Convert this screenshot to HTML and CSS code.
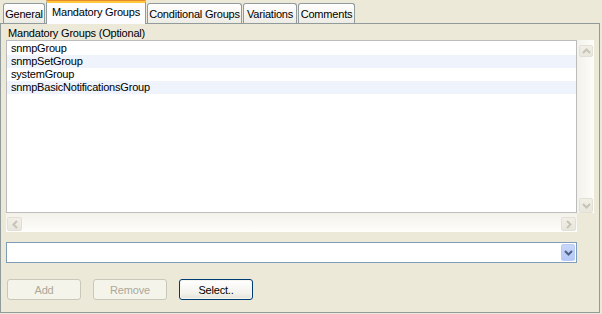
FILE: index.html
```html
<!DOCTYPE html>
<html>
<head>
<meta charset="utf-8">
<link rel="stylesheet" href="styles.css">
</head>
<body>
<div class="tabs">
  <div class="tab t-general">General</div>
  <div class="tab sel t-mand">Mandatory Groups</div>
  <div class="tab t-cond">Conditional Groups</div>
  <div class="tab t-var">Variations</div>
  <div class="tab t-com">Comments</div>
</div>
<div class="panel">
  <div class="label">Mandatory Groups (Optional)</div>
  <div class="scroller">
    <div class="list">
      <div class="row">snmpGroup</div>
      <div class="row alt">snmpSetGroup</div>
      <div class="row">systemGroup</div>
      <div class="row alt">snmpBasicNotificationsGroup</div>
    </div>
    <div class="vbar">
      <div class="sbtn">
        <svg width="9" height="6" viewBox="0 0 9 6"><path d="M1 5 L4.5 1.5 L8 5" fill="none" stroke="#C6C4B8" stroke-width="2"/></svg>
      </div>
      <div class="sbtn">
        <svg width="9" height="6" viewBox="0 0 9 6"><path d="M1 1 L4.5 4.5 L8 1" fill="none" stroke="#C6C4B8" stroke-width="2"/></svg>
      </div>
    </div>
    <div class="hbar">
      <div class="sbtn h">
        <svg width="6" height="9" viewBox="0 0 6 9"><path d="M5 1 L1.5 4.5 L5 8" fill="none" stroke="#C6C4B8" stroke-width="2"/></svg>
      </div>
      <div class="sbtn h">
        <svg width="6" height="9" viewBox="0 0 6 9"><path d="M1 1 L4.5 4.5 L1 8" fill="none" stroke="#C6C4B8" stroke-width="2"/></svg>
      </div>
    </div>
    <div class="corner"></div>
  </div>
  <div class="combo">
    <div class="combo-field"></div>
    <div class="combo-btn">
      <svg width="9" height="6" viewBox="0 0 9 6"><path d="M1 1 L4.5 4.5 L8 1" fill="none" stroke="#4D6185" stroke-width="2"/></svg>
    </div>
  </div>
  <div class="buttons">
    <div class="btn disabled">Add</div>
    <div class="btn disabled">Remove</div>
    <div class="btn default">Select..</div>
  </div>
</div>
</body>
</html>
```
FILE: styles.css
```css
html, body {
  margin: 0;
  padding: 0;
  background: #ECE9D8;
  font-family: "Liberation Sans", Arial, sans-serif;
  font-size: 11px;
  letter-spacing: -0.2px;
  color: #000;
  width: 602px;
  height: 314px;
  overflow: hidden;
}

.tabs {
  display: flex;
  align-items: flex-end;
  height: 23px;
  padding-left: 3px;
  position: relative;
  z-index: 2;
}

.tab {
  box-sizing: border-box;
  height: 20px;
  border: 1px solid #919B9C;
  border-bottom: none;
  border-radius: 3px 3px 0 0;
  background: linear-gradient(#FFFFFF, #F4F3EE 60%, #ECEBE4);
  display: flex;
  align-items: center;
  justify-content: center;
  padding-top: 1px;
  margin-right: 1px;
  white-space: nowrap;
}

.t-general { width: 42px; }
.t-mand { width: 100px; }
.t-cond { width: 95px; }
.t-var { width: 54px; }
.t-com { width: 57px; }

.tab.sel {
  height: 24px;
  margin-bottom: -1px;
  background: #FCFCFE;
  border-top: 3px solid #FFC83C;
  border-radius: 3px 3px 0 0;
  padding-top: 0;
  padding-bottom: 4px;
  position: relative;
}
.tab.sel::before {
  content: "";
  position: absolute;
  left: -1px;
  right: -1px;
  top: -3px;
  height: 1px;
  background: #E68B2C;
  border-radius: 3px 3px 0 0;
}

.panel {
  box-sizing: border-box;
  width: 600px;
  height: 290px;
  border: 1px solid #919B9C;
  padding: 3px 5px 0 5px;
  display: flex;
  flex-direction: column;
}

.label {
  height: 13px;
  line-height: 13px;
  padding-left: 2px;
}

.scroller {
  display: grid;
  grid-template-columns: 571px 17px;
  grid-template-rows: 173px 19px;
}

.list {
  box-sizing: border-box;
  border: 1px solid #BCBCBC;
  background: #FFFFFF;
  padding-top: 1px;
}

.row {
  height: 13px;
  line-height: 13px;
  padding-left: 4px;
}
.row.alt {
  background: #EEF3FC;
}

.vbar {
  background: linear-gradient(90deg, #F3F1EA, #FDFDFA);
  display: flex;
  flex-direction: column;
  justify-content: space-between;
  align-items: center;
  padding: 5px 0 0 1px;
}

.hbar {
  background: linear-gradient(#F3F1EA, #FEFEFB);
  display: flex;
  justify-content: space-between;
  align-items: flex-start;
  padding: 4px 1px 0 1px;
}

.corner {
  background: #ECE9D8;
}

.sbtn {
  box-sizing: border-box;
  width: 14px;
  height: 12px;
  border: 1px solid #E2E0D6;
  border-radius: 2px;
  background: linear-gradient(#F1EFE6, #E8E6DD);
  display: flex;
  align-items: center;
  justify-content: center;
}
.vbar .sbtn:last-child {
  height: 15px;
}
.sbtn.h {
  width: 15px;
  height: 14px;
}

.combo {
  box-sizing: border-box;
  margin-top: 10px;
  width: 571px;
  height: 21px;
  border: 1px solid #7F9DB9;
  background: #FFFFFF;
  display: flex;
  justify-content: space-between;
  align-items: center;
  padding-right: 1px;
}

.combo-btn {
  box-sizing: border-box;
  width: 14px;
  height: 17px;
  border: 1px solid #B9CCF6;
  border-radius: 2px;
  background: linear-gradient(#C8D6FA, #B4C8F6);
  display: flex;
  align-items: center;
  justify-content: center;
}

.buttons {
  display: flex;
  gap: 12px;
  margin-top: 16px;
  padding-left: 1px;
}

.btn {
  box-sizing: border-box;
  width: 74px;
  height: 21px;
  border-radius: 3px;
  display: flex;
  align-items: center;
  justify-content: center;
}
.btn.disabled {
  border: 1px solid #C9C7BA;
  background: #F5F4EA;
  color: #ACA899;
}
.btn.default {
  border: 1px solid #003C74;
  background: linear-gradient(#FFFFFF, #F3F2EC 70%, #E3E1D7);
  box-shadow: inset 0 0 0 1px #F6F5F0;
}
```
